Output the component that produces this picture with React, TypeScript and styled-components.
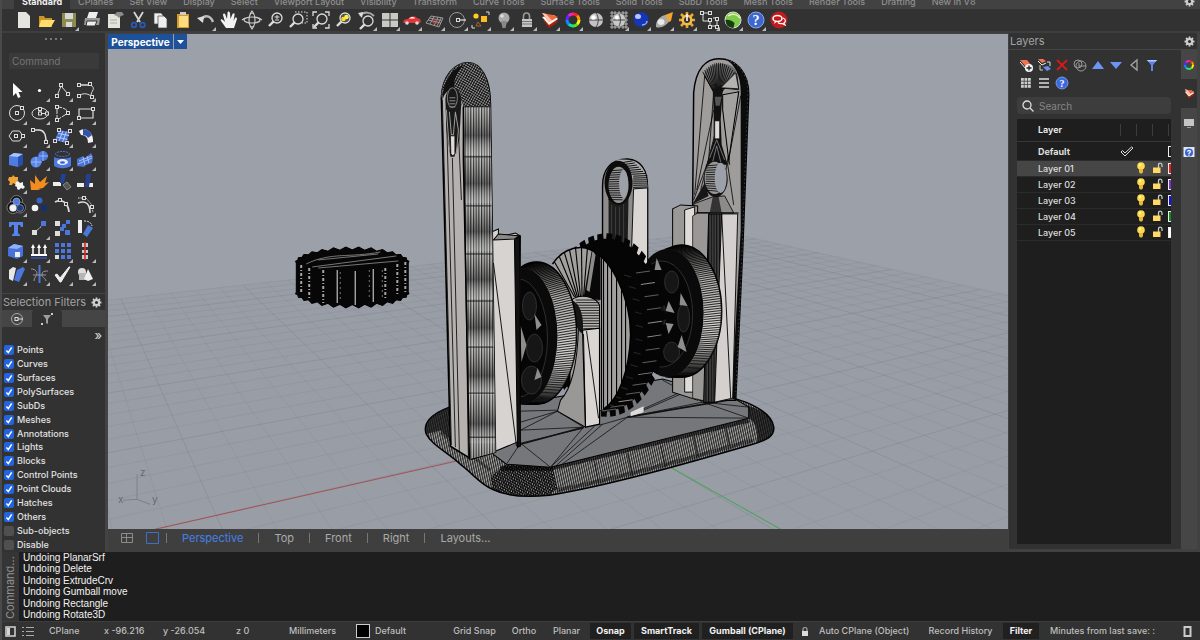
import React from "react";
import styled, { createGlobalStyle, css } from "styled-components";

const UI = `Inter, "Liberation Sans", sans-serif`;

const GlobalStyle = createGlobalStyle`
  *, *::before, *::after { box-sizing: border-box; }
  body { margin: 0; background: #323232; color: #dcdcdc; font-family: ${UI}; font-size: 10px; line-height: 14px; }
  button, input { font: inherit; color: inherit; margin: 0; }
  button { background: none; border: 0; padding: 0; cursor: pointer; }
  svg { display: block; }
`;

/* ---------- shell ---------- */
const Shell = styled.div`
  display: flex;
  flex-direction: column;
  min-height: 100vh;
  background: #414141;
  border-left: 2px solid #4a4a4a;
`;
const TabStrip = styled.nav`
  display: flex;
  align-items: flex-end;
  height: 9px;
  overflow: hidden;
  background: #424242;
  padding-left: 12px;
`;
const ToolsetTab = styled.button<{ $active?: boolean }>`
  flex: none;
  height: 14px;
  line-height: 14px;
  padding: 0 8px;
  color: ${(p) => (p.$active ? "#f0f0f0" : "#8f8f8f")};
  font-size: 9px;
  font-weight: ${(p) => (p.$active ? 700 : 500)};
  background: ${(p) => (p.$active ? "#323232" : "transparent")};
`;
const Spacer = styled.span`
  flex: 1;
`;
const GearSlot = styled.button`
  display: grid;
  place-items: center;
  width: 16px;
  height: 16px;
  margin-right: 3px;
`;
const ToolBar = styled.div`
  height: 24px;
  background: #323232;
  border-bottom: 2px solid #3e3e3e;
  padding-left: 10px;
`;
const ToolBarItems = styled.div`
  display: flex;
  justify-content: space-between;
  max-width: 778px;
`;
const IconButton = styled.button<{ $size: number }>`
  display: block;
  width: ${(p) => p.$size}px;
  height: ${(p) => p.$size}px;
`;
const Main = styled.div`
  flex: 1;
  display: grid;
  grid-template-columns: 106px minmax(0, 1fr) 192px;
`;

/* ---------- left column ---------- */
const LeftPanel = styled.aside`
  display: flex;
  flex-direction: column;
  background: #323232;
  border-right: 3px solid #434343;
`;
const Grip = styled.div`
  display: flex;
  justify-content: center;
  gap: 3px;
  padding: 5px 0 13px;
`;
const GripDot = styled.i`
  width: 2px;
  height: 2px;
  background: #777;
`;
const CommandBox = styled.input`
  width: 90px;
  height: 16px;
  margin: 0 0 10px 7px;
  padding: 0 3px;
  border: 0;
  background: #3a3a3a;
  font-size: 10px;
  &::placeholder { color: #747474; opacity: 1; }
`;
const ToolGrid = styled.div`
  display: grid;
  grid-template-columns: repeat(4, 23px);
  padding: 0 0 7px 3px;
  border-bottom: 1px solid #454545;
`;
const PanelTitle = styled.div`
  display: flex;
  align-items: center;
  justify-content: space-between;
  height: 16px;
  padding: 0 3px 0 1px;
  color: #a2a2a2;
  font-size: 11px;
  white-space: nowrap;
`;
const FilterTabs = styled.div`
  display: flex;
  height: 17px;
  background: #454545;
`;
const FilterTab = styled.button<{ $active?: boolean }>`
  display: grid;
  place-items: center;
  width: 30px;
  background: ${(p) => (p.$active ? "#323232" : "transparent")};
  border-radius: 3px 3px 0 0;
`;
const MoreButton = styled.button`
  align-self: flex-end;
  height: 16px;
  padding-right: 3px;
  color: #ddd;
  font-size: 13px;
  line-height: 11px;
`;
const FilterList = styled.div`
  flex: 1;
  display: grid;
  grid-auto-rows: 1fr;
  padding-left: 2px;
`;
const FilterRow = styled.label`
  display: flex;
  align-items: center;
  gap: 3px;
  color: #e2e2e2;
  font-size: 9px;
  font-weight: 500;
  line-height: 12px;
`;
const Check = styled.input`
  appearance: none;
  width: 10px;
  height: 10px;
  border-radius: 2px;
  background: #505050 center / 10px 10px no-repeat;
  &:checked {
    background-color: #2264e0;
    background-image: url("data:image/svg+xml,%3Csvg xmlns='http://www.w3.org/2000/svg' viewBox='0 0 10 10'%3E%3Cpath d='M2.4 5.4 4.3 7.5 7.7 2.4' fill='none' stroke='white' stroke-width='1.5'/%3E%3C/svg%3E");
  }
`;

/* ---------- viewport ---------- */
const ViewColumn = styled.main`
  display: flex;
  flex-direction: column;
  min-width: 0;
`;
const Stage = styled.section`
  position: relative;
  flex: 1;
  min-height: 300px;
  margin-top: 1px;
  background: #9ca0a8;
  overflow: hidden;
`;
const StageSvg = styled.svg`
  position: absolute;
  inset: 0;
  width: 100%;
  height: 100%;
`;
const StageLabel = styled.div`
  position: relative;
  display: flex;
  gap: 1px;
  width: max-content;
`;
const StageButton = styled.button<{ $narrow?: boolean }>`
  display: grid;
  place-items: center;
  width: ${(p) => (p.$narrow ? 13 : 65)}px;
  height: 15px;
  background: #1d529b;
  color: #fff;
  font-size: 10px;
  font-weight: 700;
`;
const ViewTabs = styled.nav`
  display: flex;
  align-items: center;
  height: 23px;
  padding: 0 0 5px 6px;
  background: #3f3f3f;
`;
const LayoutButton = styled.button`
  display: grid;
  place-items: center;
  width: 26px;
`;
const ViewTab = styled.button<{ $active?: boolean }>`
  padding: 0 15px;
  border-left: 1px solid #777;
  height: 10px;
  line-height: 10px;
  font-size: 11px;
  color: ${(p) => (p.$active ? "#4580ea" : "#aaa")};
`;

/* ---------- right column ---------- */
const RightPanel = styled.aside`
  display: grid;
  grid-template-columns: minmax(0, 1fr) 16px;
  grid-template-rows: 17px 1fr;
  margin: 0 3px 3px 1px;
  background: #323232;
`;
const LayersTitle = styled(PanelTitle)`
  grid-column: 1 / 3;
  height: 17px;
  padding: 0 2px 0 1px;
  border-bottom: 1px solid #454545;
`;
const LayersBody = styled.div`
  display: flex;
  flex-direction: column;
  padding: 6px 10px 5px 8px;
`;
const LayerTools = styled.div`
  display: grid;
  grid-template-columns: repeat(auto-fill, 18px);
  margin-bottom: 5px;
`;
const SearchBox = styled.label`
  display: flex;
  align-items: center;
  gap: 5px;
  height: 17px;
  margin-bottom: 5px;
  padding: 0 5px;
  border-radius: 4px;
  background: #3d3d3d;
  input {
    flex: 1;
    min-width: 0;
    border: 0;
    padding: 0;
    outline: 0;
    background: none;
    font-size: 10px;
  }
  input::placeholder { color: #858585; opacity: 1; }
`;
const TableWrap = styled.div`
  flex: 1;
  background: #1e1e1e;
`;
const LayerTable = styled.table`
  width: 100%;
  table-layout: fixed;
  border-collapse: collapse;
  color: #dedede;
  font-size: 9px;
  font-weight: 500;
  th, td { padding: 0; text-align: left; }
  th { height: 22px; border-bottom: 1px solid #363636; color: #f0f0f0; font-weight: 600; }
  th:first-child, td:first-child { padding-left: 21px; }
`;
const ColMark = styled.span`
  display: block;
  width: 1px;
  height: 12px;
  background: #3c3c3c;
`;
const GapRow = styled.tr`
  height: 3px;
`;
const LayerRow = styled.tr<{ $selected?: boolean; $strong?: boolean }>`
  height: 16px;
  line-height: 15px;
  background: ${(p) => (p.$selected ? "#464646" : "transparent")};
  font-weight: ${(p) => (p.$strong ? 700 : 500)};
  td { border-bottom: 1px solid #2b2b2b; }
`;
const Swatch = styled.span<{ $color: string }>`
  display: block;
  width: 3px;
  height: 11px;
  border: 1px solid #eee;
  border-right: 0;
  background: ${(p) => p.$color};
`;
const SideTabs = styled.div`
  display: flex;
  flex-direction: column;
  background: #464646;
`;
const SideTab = styled.button<{ $active?: boolean }>`
  display: grid;
  place-items: center;
  height: 29px;
  background: ${(p) => (p.$active ? "#323232" : "transparent")};
`;

/* ---------- history and status ---------- */
const History = styled.section`
  display: grid;
  grid-template-columns: 17px 1fr;
  height: 69px;
  background: #1e1e1e;
  color: #f2f2f2;
`;
const HistoryLabel = styled.div`
  writing-mode: vertical-rl;
  transform: rotate(180deg);
  padding-top: 2px;
  background: #353535;
  color: #929292;
  font-size: 11px;
  line-height: 17px;
`;
const HistoryList = styled.ol`
  display: flex;
  flex-direction: column;
  justify-content: space-between;
  margin: 0;
  padding: 0 0 1px 4px;
  list-style: none;
  font: 500 10px/11px "Liberation Sans", Arial, sans-serif;
`;
const StatusBar = styled.footer`
  display: flex;
  align-items: center;
  height: 19px;
  padding-left: 3px;
  background: #323232;
  border-top: 1px solid #3d3d3d;
  color: #bebebe;
  font-size: 9px;
  font-weight: 500;
  white-space: nowrap;
`;
const StatusSlot = styled.button<{ $w: number; $lead?: number }>`
  flex: none;
  width: ${(p) => p.$w}px;
  margin-left: ${(p) => p.$lead ?? 0}px;
  display: flex;
  align-items: center;
  gap: 5px;
`;
const Toggle = styled.button<{ $on?: boolean; $w: number }>`
  flex: none;
  width: ${(p) => p.$w}px;
  height: 16px;
  margin-right: 3px;
  text-align: center;
  ${(p) => p.$on && css`
    background: #202020;
    color: #f2f2f2;
    font-weight: 700;
  `}
`;
const MaterialSwatch = styled.span`
  width: 14px;
  height: 14px;
  border: 1px solid #ccc;
  background: #000;
`;

/* ---------- icon helpers ---------- */
const W = "#dcdcdc";
const Fly = ({ s }: { s: number }) => <path d={`M${s - 1} ${s - 4}v4h-4z`} fill="#b9b9b9" />;
const Node = ({ x, y }: { x: number; y: number }) => (
  <rect x={x - 1.5} y={y - 1.5} width="3" height="3" fill="#323232" stroke={W} strokeWidth="1" />
);
const Cog = ({ size = 11 }: { size?: number }) => (
  <svg width={size} height={size} viewBox="0 0 12 12">
    <g stroke="#cfcfcf" strokeWidth="2">
      <path d="M6 .6v10.8M.6 6h10.8M2.2 2.2l7.6 7.6M9.800 2.2 2.200 9.800" />
    </g>
    <circle cx="6" cy="6" r="3.900" fill="#cfcfcf" />
    <circle cx="6" cy="6" r="1.700" fill="#323232" />
  </svg>
);
const wheelColors = ["#f22", "#f90", "#fe1", "#4e2", "#1db", "#18f", "#62f", "#e2c"];
const ColorWheel = ({ cx, cy, r, w }: { cx: number; cy: number; r: number; w: number }) => (
  <g fill="none" strokeWidth={w}>
    {wheelColors.map((c, i) => {
      const a = (i * Math.PI) / 4 - Math.PI / 2;
      const b = a + Math.PI / 4 + 0.05;
      return (
        <path key={c} stroke={c}
          d={`M${cx + r * Math.cos(a)} ${cy + r * Math.sin(a)}A${r} ${r} 0 0 1 ${cx + r * Math.cos(b)} ${cy + r * Math.sin(b)}`} />
      );
    })}
  </g>
);
const Lens = ({ x = 13, y = 9 }: { x?: number; y?: number }) => (
  <g fill="none" stroke={W}>
    <circle cx={x} cy={y} r="5" strokeWidth="1.300" />
    <path d={`M${x - 3.600} ${y + 3.600}L${x - 8} ${y + 8}`} strokeWidth="2.400" />
  </g>
);
const Layers = () => (
  <g>
    <path d="M4 11l6 8 9-6-4-4z" fill="#a81f0c" />
    <path d="M3 8l7 8 9-6-4-4z" fill="#f1f1f1" />
    <path d="M3 4l7 9 9-5-5-2z" fill="#f0653a" />
    <path d="M3 4l7 9 3-1.500L7 5z" fill="#ffc9b0" />
  </g>
);
const Cursor = <path d="M8 4v13l3-3 2 5 2.500-1-2-5h4z" fill="#fff" />;

const topIcons: [string, React.ReactNode, boolean?][] = [
  ["New", <path key="a" d="M6 3h8l4 4v12H6z" fill="#e4e4e0" />],
  ["Open", <g key="a"><path d="M4 7h5l1 2h7v9H4z" fill="#c99524" /><path d="M6 11h14l-4 7H4z" fill="#ffdc6b" /></g>],
  ["Save", <g key="a"><path d="M4 4h14v14H4z" fill="#8d8a52" /><path d="M7 4h8v6H7zM8 13h6v5H8z" fill="#d8d8d8" /></g>, true],
  ["Print", <g key="a"><path d="M8 3h9l-2 6H6z" fill="#eee" /><path d="M4 9h15l-1 7H3z" fill="#9a9a9a" /><path d="M6 12h10l-2 5H5z" fill="#ededed" stroke="#333" /></g>],
  ["Properties", <g key="a"><path d="M4 5h12v14H4z" fill="#e3e3dc" /><path d="M10 6l3-3h5l2 3-3 1-2 2-2-2z" fill="#8c8c8c" /><path d="M6 11h7M6 14h7" stroke="#aaa" /></g>],
  ["Cut", <g key="a" fill="none" strokeWidth="1.800"><path d="M7 3l6 10M16 3l-6 10" stroke="#d5d5d5" /><circle cx="7" cy="16" r="2.300" stroke="#2859b9" /><circle cx="15.500" cy="16" r="2.300" stroke="#2859b9" /></g>],
  ["Copy", <g key="a" fill="#eee" stroke="#444" strokeWidth=".700"><path d="M5 4h7l2 2v9H5z" /><path d="M9 7h6l3 3v9H9z" /></g>],
  ["Paste", <g key="a"><path d="M5 5h12v14H5z" fill="#d49a2a" /><path d="M7 7h9v11H7z" fill="#ffdb80" /><path d="M8 3h6v3H8z" fill="#ccc" /></g>],
  ["Undo", <g key="a"><path d="M6 12c2-6 9-7 12 1" fill="none" stroke="#bcbcbc" strokeWidth="2.400" /><path d="M2 9l7-2-1 7z" fill="#ddd" /></g>, true],
  ["Pan", <path key="a" d="M8 19l-5-7c-1-2 1-2 2-1l2 2-2-7c0-2 2-2 2.500 0L9 10 9.500 4c0-2 2-2 2.500 0l.5 6L14.500 5c1-1 2.500-1 2 1l-1 6 1.500-3c1-1 2 0 2 1l-3 9z" fill="#f2f2f2" />],
  ["Rotate View", <g key="a" fill="none" stroke="#ccc" strokeWidth="1.200"><ellipse cx="11" cy="11" rx="8" ry="3" /><ellipse cx="11" cy="11" rx="3" ry="7" /><path d="M1 11l3-2M21 11l-3-2M9 5l2-3 2 3M9 17l2 3 2-3" /></g>],
  ["Zoom Dynamic", <g key="a"><Lens /><path d="M10.500 8h5M13 6v4M11 11h4" stroke={W} /></g>],
  ["Zoom Window", <g key="a"><Lens x={11} y={10} /><path d="M8 3h12v11h-5" fill="none" stroke={W} strokeDasharray="1.500 1.500" /></g>],
  ["Zoom Extents", <g key="a"><Lens x={12} y={10} /><path d="M3 7V3h4M15 3h4v4M3 15v4h4M19 15v4h-4" fill="none" stroke={W} strokeWidth="1.300" /></g>],
  ["Zoom Selected", <g key="a"><Lens x={12} /><circle cx="12" cy="9" r="4" fill="#555" /><circle cx="10.500" cy="10" r="2.300" fill="#fd2" /><circle cx="13.500" cy="8" r="2.300" fill="#fe4" /></g>],
  ["Undo View", <g key="a"><Lens x={12} y={12} /><path d="M4 7c4-5 10-4 14 0" fill="none" stroke="#aaa" strokeWidth="2" /><path d="M2 4l5-1-1 6z" fill="#ddd" /></g>, true],
  ["Four View", <g key="a" fill="#c9c9c4"><path d="M3 4h7.500v6.500H3zM11.500 4H19v6.500h-7.500zM3 11.500h7.500V18H3zM11.500 11.500H19V18h-7.500z" /></g>, true],
  ["Set View", <g key="a"><path d="M2 13c1-3 3-3 5-3 2-3 7-4 9-1l3 1c1 1 1 3 0 4H3z" fill="#e23535" /><path d="M8 9.500c2-2 5-2 6 0z" fill="#fff" /><circle cx="6" cy="14" r="1.800" fill="#ddd" /><circle cx="16" cy="14" r="1.800" fill="#ddd" /></g>, true],
  ["CPlane", <g key="a" fill="none" stroke="#a5a5a5" strokeWidth=".900"><path d="M7 7l12 2-4 9-13-4zM4 11l13 3M5.500 9l12 2.500M10 7.500L6 15M14 8l-4 9M17 9l-4 8" /><path d="M9 11h4v3H9z" stroke="#c44" /></g>, true],
  ["Object Snap", <g key="a" fill="none" stroke={W}><circle cx="10" cy="11" r="7.500" stroke="#999" /><path d="M13 11h6" strokeWidth="1.300" /><Node x={11} y={11} /></g>, true],
  ["Select", <g key="a"><circle cx="6" cy="7" r="2.600" fill="#fc2" /><path d="M11 7h6v6h-6z" fill="#fb2" /><path d="M6 17l2-4 3 4z" fill="none" stroke="#a62" /><path d="M16 3h3v3M2 16v3h3" fill="none" stroke={W} /></g>, true],
  ["Visibility", <g key="a"><circle cx="11" cy="9" r="5.500" fill="#a9a9a9" /><path d="M8 12h6l-1.500 7h-3z" fill="#888" /><circle cx="9" cy="7" r="1.800" fill="#ddd" /></g>, true],
  ["Lock", <g key="a"><path d="M7.500 11V7c0-4 6-4 6 0v4" fill="none" stroke="#999" strokeWidth="1.600" /><path d="M6 10h10v8H6z" fill="#c5c5c5" /><path d="M6 12.500h10M6 15h10" stroke="#777" /></g>, true],
  ["Layers", <Layers key="a" />, true],
  ["Object Color", <ColorWheel key="a" cx={11} cy={11} r={6} w={3} />, true],
  ["Shade", <g key="a"><circle cx="11" cy="11" r="7" fill="#c4c4c4" /><path d="M4 11h14M11 4c3 4 3 10 0 14" stroke="#444" fill="none" /><circle cx="8.500" cy="8.500" r="2.300" fill="#fff" /></g>],
  ["Wireframe", <g key="a"><path d="M2 4h18M2 7h18M2 15h18M2 18h18M4 2v18M7 2v18M15 2v18M18 2v18M11 2v18M2 11h18" stroke="#ccc" strokeWidth=".800" /><circle cx="11" cy="11" r="6.500" fill="#c9c9c9" /><path d="M11 5c2 4 2 8 0 12M5 11h12" stroke="#444" fill="none" /><circle cx="9" cy="8.500" r="2" fill="#fff" /></g>, true],
  ["Render", <g key="a"><circle cx="11" cy="10.500" r="7.500" fill="#1736b5" /><ellipse cx="8" cy="7.500" rx="3" ry="2.500" fill="#b8c8ff" /><path d="M12 16c3 0 5-2 5-4" stroke="#8ab0ff" strokeWidth="1.500" fill="none" /></g>, true],
  ["Spotlight", <g key="a"><path d="M3 18c-1-6 5-12 10-12l4 5c-3 5-9 9-14 7z" fill="#a9a9a9" /><ellipse cx="8" cy="13" rx="3.500" ry="3" fill="#e9e9e9" /><path d="M12 6l8-3-2 9-2 1z" fill="#f3a533" /></g>, true],
  ["Options", <g key="a"><path d="M11 3v16M3 11h16M5 5l12 12M17 5L5 17" stroke="#e8a82c" strokeWidth="2.600" /><circle cx="11" cy="11" r="5.500" fill="#f1bd4b" /><circle cx="11" cy="11" r="3" fill="#333" /><path d="M11 5v7" stroke="#fff" strokeWidth="1.600" /></g>, true],
  ["History", <g key="a" fill="none" stroke={W}><path d="M3 4h8M4 4v8h6M11 9v8h7M14 9h4v8" /><Node x={3} y={4} /><Node x={11} y={4} /><Node x={11} y={11} /><Node x={18} y={10} /><Node x={11} y={18} /><Node x={18} y={18} /></g>, true],
  ["Grasshopper", <g key="a"><circle cx="11" cy="11" r="8" fill="#7fc94b" stroke="#ddd" /><path d="M3.500 11c3-1 7 1 9 3l-1 5c-5 0-8-3-8-8z" fill="#173b12" /><path d="M6 7c4-3 9-2 12 2" stroke="#dcf5b2" strokeWidth="1.500" fill="none" /></g>, true],
  ["Help", <g key="a"><circle cx="11" cy="11" r="8" fill="#3d66cf" stroke="#8aa8ea" /><text x="11" y="16" textAnchor="middle" fontSize="14" fontWeight="700" fill="#fff" fontFamily="Liberation Serif">?</text></g>, true],
  ["Forum", <g key="a"><circle cx="11" cy="11" r="8.500" fill="#c2191c" /><ellipse cx="9.500" cy="9.500" rx="4.500" ry="3" fill="none" stroke="#fff" strokeWidth="1.500" /><path d="M7 12l-1 3 3-2.500" fill="#fff" /><path d="M15 9c3 1 3 4 1 5l1 2-3-1.500c-2 .5-3 0-4-1" fill="none" stroke="#fff" strokeWidth="1.200" /></g>],
];

const Mesh = ({ dy = 0 }: { dy?: number }) => (
  <g>
    <path d={`M8 ${5 + dy}l11 2-4 11-11-3z`} fill="#4d74d4" />
    <path d={`M12 ${6 + dy}l-4 10M15.500 ${6.500 + dy}l-4 10.500M7 ${8.500 + dy}l11 2M5.500 ${12 + dy}l11 2.500`} stroke="#b7cbff" fill="none" />
  </g>
);
const paletteIcons: [string, React.ReactNode, boolean?][] = [
  ["Select", Cursor],
  ["Point", <g key="a"><circle cx="11.500" cy="11.500" r="1.600" fill="#fff" /></g>, true],
  ["Polyline", <g key="a" stroke={W} fill="none"><path d="M6 17L10 7l7 8" /><Node x={6} y={17} /><Node x={10} y={6} /><Node x={17} y={15} /></g>, true],
  ["Curve", <g key="a" stroke={W} fill="none"><path d="M5 6h9c5 0 6 3 5 5s-2 3-2 6M5 6h11" /><path d="M5 17c3-3 8-3 12 0" /><Node x={5} y={6} /><Node x={16} y={5} /><Node x={5} y={17} /><Node x={18} y={18} /></g>, true],
  ["Circle", <g key="a" stroke={W} fill="none"><circle cx="12" cy="11" r="7.500" /><Node x={12} y={11} /><Node x={17} y={6} /></g>, true],
  ["Ellipse", <g key="a" stroke={W} fill="none"><ellipse cx="12" cy="11.500" rx="8" ry="5.500" /><path d="M12 11.500h8M12 6v5" /><Node x={12} y={11.500} /><Node x={12} y={7} /><Node x={19} y={11.500} /></g>, true],
  ["Arc", <g key="a" stroke={W} fill="none"><path d="M6 5c6 0 11 3 11 6M6 18L17 11M6 18V5" strokeDasharray="5 1" /><Node x={6} y={5} /><Node x={6} y={18} /><Node x={17} y={11} /></g>, true],
  ["Rectangle", <g key="a" stroke={W} fill="none" strokeWidth="1.200"><path d="M5 7h14v9H5z" /><Node x={5} y={16} /><Node x={19} y={7} /></g>, true],
  ["Polygon", <g key="a" stroke={W} fill="none"><path d="M4 11l3.500-5h7L18 11l-3.500 5h-7z" /><Node x={11} y={11} /><Node x={18} y={11} /></g>, true],
  ["Fillet", <g key="a" stroke={W} fill="none" strokeWidth="1.500"><path d="M5 5h6c5 0 7 5 7 12" /><Node x={5} y={5} /><Node x={18} y={17} /></g>, true],
  ["Surface", <g key="a"><Mesh /><Node x={8} y={5} /><Node x={19} y={6} /><Node x={4} y={16} /><Node x={16} y={18} /></g>, true],
  ["Bend", <g key="a"><path d="M5 6c7-5 15 2 14 11l-5 1c0-5-2-8-7-8z" fill="#f1f1f1" /><path d="M9 4c4 0 7 2 9 6l-4 3c-1-2-3-3-5-3z" fill="#3155ae" /></g>, true],
  ["Box", <g key="a"><path d="M4 8l5-3 9 1v10l-5 3-9-2z" fill="#4e7ce2" /><path d="M4 8l5-3 9 1-5 3z" fill="#a8c4ff" /><path d="M13 9l5-3v10l-5 3z" fill="#274eaa" /></g>, true],
  ["Sphere", <g key="a"><circle cx="15" cy="8" r="5" fill="#4b77dc" /><circle cx="8" cy="14" r="5.500" fill="#5a86ea" /><path d="M3 14h11M8 9v10M15 3v10M11 8h9" stroke="#a9c3ff" strokeWidth=".800" /></g>, true],
  ["Boolean", <g key="a"><ellipse cx="11.500" cy="6" rx="7" ry="2.500" fill="none" stroke="#4d78dc" strokeDasharray="2 1" /><path d="M3 9v9c5 3 12 3 17 0V9c-5 2-12 2-17 0z" fill="#4d78dc" /><ellipse cx="11.500" cy="14" rx="5.500" ry="3" fill="#e6edff" /><ellipse cx="11.500" cy="14.500" rx="2.500" ry="1.300" fill="#3c63c4" /></g>, true],
  ["Extrude", <g key="a"><path d="M3 11l6-3 2 2 6-5 2 4-1 6-6 2-2 2-7-1z" fill="#4b72cf" /><path d="M5 13l13-5M4 16l14-6M9 9l2 8M13 8l2 7" stroke="#a5bfff" /></g>, true],
  ["Join", <g key="a"><path d="M4 6h3l1-2 2 2h3v3l-1 2 1 2h-3l-2-1-1 2H4l1-3-2-2z" fill="#f4a436" /><path d="M11 11l2-1 2 2 3-1v3l2 2-2 2-2-1-2 2-2-1 0-2-2-1z" fill="#f4f4f4" /></g>, true],
  ["Explode", <path key="a" d="M3 19L2 9l5 4 0-9 5 7 7-6-2 7 4-1-6 6-5 1 3 1z" fill="#f28c1e" />],
  ["Trim", <g key="a"><path d="M2 11h8v4H2z" fill="#eee" /><path d="M10 3h5l-2 9h-4z" fill="#253f92" /><path d="M12 14l4-3 4 5-4 3z" fill="#555" stroke="#888" /></g>],
  ["Split", <g key="a"><path d="M3 12h7v4H3zM13 12h6v4h-6z" fill="#eee" /><path d="M12 3h5l-2 13h-4z" fill="#253f92" /></g>],
  ["Group", <g key="a" stroke="#ccc" strokeWidth=".500"><circle cx="11.500" cy="7.500" r="6" fill="#111" /><circle cx="8" cy="13.500" r="6" fill="#111" /><circle cx="15" cy="13.500" r="5.500" fill="#111" /><circle cx="11.500" cy="7.500" r="3.500" fill="#4d7ae0" /><circle cx="8" cy="14" r="3.500" fill="#f4f4f4" /><circle cx="15" cy="14" r="3.500" fill="#1d3a80" /></g>, true],
  ["Ungroup", <g key="a"><circle cx="11.500" cy="6.500" r="3" fill="#3764c8" /><circle cx="7" cy="14" r="3.300" fill="#f4f4f4" /><circle cx="16" cy="14" r="3.300" fill="#16306d" /></g>],
  ["Edit Points", <g key="a" stroke={W} fill="none"><path d="M4 8c7-4 13 1 14 10" strokeWidth="1.800" /><Node x={9} y={6} /><Node x={15} y={10} /></g>],
  ["Control Points", <g key="a" stroke={W} fill="none"><path d="M4 9c8-3 12 1 12 10" strokeWidth="1.600" /><path d="M4 4h8l6 7 1 8" strokeDasharray="1.500 1" /><Node x={10} y={4} /><Node x={18} y={13} /></g>, true],
  ["Text", <path key="a" d="M4 5h14v5h-2l-1-2h-2v8l2 2v1H7v-1l2-2V8H7l-1 2H4z" fill="#5583ea" />],
  ["Move", <g key="a"><path d="M7 15L15 8" stroke="#ddd" strokeDasharray="2 1" /><path d="M4 13h5v5H4z" fill="#ddd" /><path d="M13 4h5v5h-5z" fill="#4b77dc" /></g>, true],
  ["Copy Objects", <g key="a"><path d="M4 4h5v5H4zM4 14h5v5H4z" fill="#ddd" /><path d="M11 7h4v4h-4zM15 3h4v4h-4zM9 10h4v4H9zM14 13h5v5h-5z" fill="#4b77dc" /></g>],
  ["Align", <g key="a"><path d="M4 3h4v13H4z" fill="#eee" /><path d="M14 8l5 3-6 9-4-3z" fill="#4b77dc" /><path d="M10 4c4 0 7 1 8 5" stroke={W} fill="none" strokeDasharray="2 1" /></g>],
  ["Solid Tools", <g key="a"><path d="M3 8l6-4 9 2v10l-6 3-9-3z" fill="#4573d8" /><path d="M3 8l6-4 9 2-6 3z" fill="#8fb1ff" /><path d="M10 12h5v5h-5z" fill="#eee" /></g>, true],
  ["Extrude Curve", <g key="a"><path d="M5 15V6M11 15V6M17 15V6" stroke="#fff" strokeWidth="1.500" /><path d="M3 8l2-4 2 4zM9 8l2-4 2 4zM15 8l2-4 2 4zM3 14h16v2H3z" fill="#fff" /><path d="M3 17h16v2H3z" fill="#2e4d96" /></g>, true],
  ["Array", <g key="a">{[0, 1, 2].map((r) => [0, 1, 2].map((c) => <rect key={`${r}${c}`} x={4 + c * 6} y={3 + r * 6} width="4" height="4" fill={r === 2 && c === 0 ? "#ddd" : "#4b77dc"} />))}</g>, true],
  ["Mirror", <g key="a"><path d="M8 3h6v4H8zM8 10h6v3H8zM8 15h6v4H8z" fill="#ccc" /><path d="M11 2v18" stroke="#d22" strokeWidth="1.600" /></g>, true],
  ["Offset", <g key="a"><path d="M4 7l4-3 3 1-3 13-4-2z" fill="#e8e8e8" /><path d="M12 7l6-3 2 2-6 13-5-2z" fill="#4b77dc" /></g>, true],
  ["Flow", <g key="a" fill="none" stroke="#999"><path d="M11.500 2v18" stroke="#4b77dc" strokeWidth="2" /><path d="M3 6c5 0 6 3 6 5s-3 3-3 7M20 8c-5 0-6 1-6 4s3 2 4 6M5 12h13" /></g>, true],
  ["Check", <path key="a" d="M4 12l2-1 3 4L18 4l1 0-9 15H9z" fill="#eee" stroke="#eee" />, true],
  ["Primitives", <g key="a"><circle cx="8" cy="9" r="4" fill="#ddd" /><path d="M5 10h7v7H5z" fill="#b5b5b5" /><path d="M14 6l5 10-5 2-4-2z" fill="#eee" /></g>, true],
];

/* ---------- scene ---------- */
type P = [number, number];
const pts = (a: P[]) => a.map((p) => `${p[0].toFixed(1)},${p[1].toFixed(1)}`).join(" ");
const meet = (a: P, b: P, c: P, d: P): P => {
  const den = (a[0] - b[0]) * (c[1] - d[1]) - (a[1] - b[1]) * (c[0] - d[0]);
  const m = a[0] * b[1] - a[1] * b[0];
  const n = c[0] * d[1] - c[1] * d[0];
  return [(m * (c[0] - d[0]) - (a[0] - b[0]) * n) / den, (m * (c[1] - d[1]) - (a[1] - b[1]) * n) / den];
};
const vpA: P = [2131, 74];
const vpB: P = [22, 73];
const footA = (k: number): P => [155 + 91 * k, 529];
const footB = (k: number): P => [772 + 55 * k, 529];

const GroundGrid = () => {
  const edgeA = footA(-23);
  const edgeB = footB(23);
  const corner = meet(edgeA, vpA, edgeB, vpB);
  const a: React.ReactNode[] = [];
  for (let k = -23; k <= 16; k++) {
    const f = footA(k);
    const far = meet(f, vpA, edgeB, vpB);
    const t = 108 < f[0] ? f : meet(f, vpA, [108, 0], [108, 1]);
    a.push(<path key={`a${k}`} d={`M${t[0]} ${t[1]}L${far[0]} ${far[1]}`} opacity={k % 5 === 0 ? 0.4 : 0.22} />);
  }
  for (let k = -13; k <= 23; k++) {
    const f = footB(k);
    const far = meet(f, vpB, edgeA, vpA);
    a.push(<path key={`b${k}`} d={`M${f[0]} ${f[1]}L${far[0]} ${far[1]}`} opacity={k % 5 === 0 ? 0.4 : 0.22} />);
  }
  return (
    <g>
      <path d={`M108 300L${corner[0]} ${corner[1]}L1007 294V529H108z`} fill="#969ba3" opacity=".45" />
      <g stroke="#747a84" strokeWidth=".800">{a}</g>
      <path d="M155 529L460 460" stroke="#a8474d" strokeWidth=".900" />
      <path d="M668 466L780 529" stroke="#4da35c" strokeWidth="1" />
    </g>
  );
};

type Ell = { cx: number; cy: number; rx: number; ry: number };
const at = (e: Ell, deg: number, k = 1): P => {
  const a = (deg * Math.PI) / 180;
  return [e.cx + e.rx * k * Math.cos(a), e.cy + e.ry * k * Math.sin(a)];
};
const Rim = ({ front, back, from, to, step }: { front: Ell; back: Ell; from: number; to: number; step: number }) => {
  const lines: React.ReactNode[] = [];
  for (let d = from; d <= to; d += step) {
    const p = at(front, d);
    const q = at(back, d);
    lines.push(<path key={d} d={`M${p[0]} ${p[1]}L${q[0]} ${q[1]}`} />);
  }
  return <g stroke="#000" strokeWidth=".800">{lines}</g>;
};
const Shards = ({ list }: { list: string[] }) => (
  <g fill="#8f8e8d">{list.map((d) => <polygon key={d} points={d} />)}</g>
);
const Wheel = ({ front, back, inner, shards, holes }: { front: Ell; back: Ell; inner: Ell; shards: string[]; holes: Ell[] }) => (
  <g>
    <ellipse {...back} fill="#c9c7c5" stroke="#000" strokeWidth="1.500" />
    <ellipse {...back} fill="url(#wheelShade)" />
    <Rim front={front} back={back} from={-95} to={95} step={2.1} />
    <ellipse {...front} fill="#0a0a0a" />
    <ellipse {...inner} fill="#060606" stroke="#484848" strokeWidth=".600" />
    {holes.map((h, i) => (
      <ellipse key={i} {...h} fill="#161616" stroke="#3c3c3c" strokeWidth=".700" />
    ))}
    <Shards list={shards} />
  </g>
);

const outerGear: Ell = { cx: 606, cy: 325, rx: 58, ry: 89 };
const BigGear = () => {
  const ring: P[] = [];
  const marks: React.ReactNode[] = [];
  const teeth = 40;
  const pitch = 360 / teeth;
  for (let i = 0; i < teeth; i++) {
    const d = i * pitch;
    const right = d < 80 || d > 290;
    const root = right ? 0.96 : 0.97;
    ring.push(at(outerGear, d, 1.03), at(outerGear, d + pitch * 0.6, 1.03), at(outerGear, d + pitch * 0.65, root), at(outerGear, d + pitch * 0.95, root));
    if (d < 75 || d > 310) {
      const q = at(outerGear, d + pitch * 0.8, 0.97);
      marks.push(<path key={i} d={`M${q[0] - 15} ${q[1] + 1}L${q[0] - 1} ${q[1] - 1}`} opacity={i % 3 ? 0.65 : 1} />);
      marks.push(<path key={`${i}r`} d={`M${q[0] - 27} ${q[1] + 3}l7 2`} opacity=".25" />);
    }
  }
  const fans: P[] = [[554, 262], [559, 257], [564, 253], [569, 250], [575, 248], [581, 247], [587, 247], [593, 249]];
  return (
    <g>
      <polygon points={pts(ring)} fill="#050505" />
      <g stroke="#8e8e8e" strokeWidth="1">{marks}</g>
      <clipPath id="gearFace"><path d="M552 264C560 252 572 246 585 248C612 255 630 300 630 335C629 370 618 400 603 409L592 412L570 400V300z" /></clipPath>
      <g clipPath="url(#gearFace)">
        <rect x="540" y="240" width="95" height="180" fill="#a2a09f" />
        <g stroke="#000" strokeWidth="1.100">
          {fans.map((f, i) => <path key={i} d={`M${f[0]} ${f[1]}L${574 + i * 1.500} 297`} />)}
          {[601, 603, 607, 611, 616, 621, 625].map((x) => <path key={x} d={`M${x} 245V420`} />)}
        </g>
        <path d="M583 298L592 246L600 250V300z" fill="#080808" />
        <path d="M586 290L592 250 595 255 589 292z" fill="#8d8b8a" />
      </g>
      <path d="M552 264C560 252 572 246 585 248C612 255 630 300 630 335C629 370 618 400 603 409" fill="none" stroke="#000" strokeWidth="1.500" />
    </g>
  );
};

const SmallGear = () => {
  const top: P[] = [];
  const n = 28;
  for (let i = 0; i <= n; i++) {
    const a = Math.PI + (i * Math.PI) / n;
    const k = i % 2 ? 1 : 0.82;
    top.push([352 + 57 * Math.cos(a) * (i % 2 ? 1 : 0.98), 263 + 16 * k * Math.sin(a)]);
  }
  const bottom: P[] = [];
  for (let i = 0; i <= n; i++) {
    const a = (i * Math.PI) / n;
    const k = i % 2 ? 1 : 0.78;
    bottom.push([352 + 57 * Math.cos(a) * (i % 2 ? 1 : 0.98), 292 + 16 * k * Math.sin(a)]);
  }
  return (
    <g>
      <polygon points={pts([...top, ...bottom])} fill="#070707" stroke="#000" />
      <g stroke="#a5a5a5" fill="none">
        <path d="M306 264C330 252 350 258 380 252M312 267L396 256M318 260l60-6M318 268l80-7" strokeWidth=".700" />
        <g strokeWidth="2" strokeDasharray="3 2 1 2">
          <path d="M301 265v28M309 268v32M323 270v33M385 268v32M397 264v32M405 262v30" />
        </g>
        <path d="M337 270v33M355 271v34M373 269v33" strokeWidth="1.400" />
        <path d="M340 272v28M369 270v30M382 270v28" strokeWidth=".700" strokeDasharray="2 3" />
      </g>
    </g>
  );
};

const BEVEL = "M449 407C430 414 422 424 426 434C432 446 448 452 461 465C474 475 480 484 492 489C508 497 530 497 549 495C610 485 690 462 752 444C766 440 774 436 773 427C772 418 762 409 745 402L733 398H520z";
const Base = () => (
  <g>
    <path d={BEVEL} fill="#aaa9a8" />
    <path d={BEVEL} fill="url(#bevelLines)" stroke="#000" strokeWidth="1.500" />
    <path d="M492 489C508 497 530 497 549 495L557 488L552 467L506 464L490 476z" fill="url(#mesh)" />
    <path d="M426 434C424 420 432 412 449 407V438L440 430z" fill="#111" opacity=".75" />
    <path d="M745 405C762 409 772 418 773 427C773 436 768 438 756 443C758 430 755 422 748 418z" fill="#0b0b0b" opacity=".72" />
    <path d="M500 468L550 468L748 420" fill="none" stroke="#000" strokeWidth="5" opacity=".6" />
    <path d="M556 490C615 479 690 458 752 440" fill="none" stroke="#000" strokeWidth="4" opacity=".4" />
    <path d="M490 452L506 464L550 467L748 418V407L733 398L662 379L520 403z" fill="#76777a" stroke="#000" />
    <path d="M440 432C455 445 475 458 490 470" stroke="#000" strokeWidth="3" opacity=".35" fill="none" />
    <g stroke="#111" fill="none" strokeWidth=".800">
      <path d="M520 443L550 467M520 443L506 464M550 467L583 427M550 467L594 426M556 465L602 424M560 465L627 417M520 443L583 428M520 430L583 427L557 411L520 422M520 430L557 411M599 425L627 417L748 418M627 417L702 402L748 418M662 380L702 402M640 410L680 392M627 417L680 394M702 402L748 407M520 411L557 410" />
      <path d="M520 444L583 427M627 417L733 399" strokeWidth="1.600" />
      <path d="M594 461l4 22M627 453l5 23M660 445l5 22M693 436l4 20M725 428l4 18" />
    </g>
  </g>
);

const RightTower = () => (
  <g>
    <path d="M693 93C695 68 706 59 718 59C735 59 748 72 748 95L742 250L735 400H700L692 205z" fill="#9f9d9c" stroke="#000" strokeWidth="1.500" />
    <path d="M724 59C740 62 748 76 748 95L742 250L735 400L731 398L740 230V92C740 76 734 64 724 59z" fill="#0b0b0b" />
    <path d="M726 60C743 66 748 80 747 97L741 260L735 395" fill="none" stroke="#555" strokeWidth="1" strokeDasharray="1 3" />
    <path d="M703 75C708 62 730 60 736 72L719 94L712 92z" fill="#6a6a6a" />
    <g stroke="#000" strokeWidth=".800" fill="none">
      {Array.from({ length: 17 }, (_, i) => <path key={i} d={`M${702 + i * 2} ${72 - 9 * Math.sin((i * Math.PI) / 16)}L${714 + i * 0.400} 94`} />)}
      <path d="M704 76L713 92L708 160L693 200M704 76L694 195M713 110L696 190M714 135L700 190M738 92L722 190M740 96L727 165L733 205M720 90L729 165M736 74L738 90L720 88zM738 92L722 98" />
    </g>
    <path d="M720 88L735 73L738 89z" fill="#b5b3b1" stroke="#000" strokeWidth=".800" />
    <path d="M722 95L738 92L728 160L722 110z" fill="#a4a2a0" stroke="#000" />
    <path d="M712 90L722 90L720 120L721 145L727 165H706L713 140L713 112z" fill="#111" />
    <path d="M714 97L721 97L719 106H715z" fill="#555" />
    <path d="M714 121h5v18h-5z" fill="#dedbd8" stroke="#000" strokeWidth=".700" />
    <path d="M709 158L716 140L724 160M712 162L716 146L720 162" fill="none" stroke="#888" strokeWidth=".800" />
    <ellipse cx="715" cy="179" rx="12" ry="18" fill="#141414" />
    <ellipse cx="714" cy="178" rx="10" ry="16" fill="#999" />
    <g stroke="#000" strokeWidth=".800">{Array.from({ length: 12 }, (_, i) => <path key={i} d={`M705 ${166 + i * 2.200}L718 ${165 + i * 2.400}`} />)}</g>
    <ellipse cx="720" cy="178" rx="6" ry="15" fill="#9ca0a8" />
    <path d="M693 204L712 197L724 196L733 213L697 213z" fill="#8d8b8a" stroke="#000" strokeWidth=".800" />
    <path d="M712 197h6l3 16h-12z" fill="#333" />
    <path d="M692 204L704 183L708 196z" fill="#171717" />
    <path d="M672 209L680 205L697 206V400L672 392z" fill="#9b9997" stroke="#000" />
    <path d="M684 210L694 207V392H684z" fill="#dedbd8" stroke="#000" strokeWidth=".900" />
    <path d="M692 216L697 213H709V402L692 398z" fill="#9a9896" stroke="#000" strokeWidth=".700" />
    <path d="M708 214H722L716 402H703z" fill="#444" />
    <path d="M708 214H722L716 402H703z" fill="url(#vLines)" stroke="#000" />
    <path d="M721 214H737L732 398L714 402z" fill="#d3d0cd" stroke="#000" strokeWidth=".900" />
    <path d="M721 214L730 398M695 213H738" stroke="#000" strokeWidth=".900" />
  </g>
);

const CenterArm = () => (
  <g>
    <path d="M602 250V186C602 170 610 159 627 159C641 160 647 170 647 188V275H602z" fill="#8f8d8c" stroke="#000" strokeWidth="1.400" />
    <path d="M614 160C640 157 647 170 647 189L633 190C632 172 626 163 614 160z" fill="#aaa" />
    <g stroke="#000" strokeWidth=".900">{Array.from({ length: 14 }, (_, i) => <path key={i} d={`M${620 + Math.min(i, 7) * 1.800} ${163 + i * 1.900}L${632 + Math.min(i, 7) * 2.100} ${161 + i * 2.100}`} />)}</g>
    <path d="M633 189L647 188V280H630z" fill="#d9d6d3" stroke="#000" strokeWidth=".900" />
    <path d="M608 192C614 205 622 206 628 194L627 250H608z" fill="#1d1d1d" />
    <path d="M611 205v40M615 207v40M619 207v40M623 204v40" stroke="#555" strokeWidth=".600" />
    <ellipse cx="618" cy="183" rx="14" ry="22" fill="#0c0c0c" />
    <ellipse cx="618" cy="185" rx="10" ry="18" fill="#959595" />
    <g stroke="#000" strokeWidth=".800">{Array.from({ length: 14 }, (_, i) => <path key={i} d={`M608 ${171 + i * 2.200}L622 ${170 + i * 2.300}`} />)}</g>
    <ellipse cx="623" cy="184" rx="4.500" ry="14" fill="#9ca0a8" />
  </g>
);

const LeftTower = () => (
  <g>
    <path d="M491 232l7-3v8l17-4 5 3-1 205-29 12z" fill="#d6d3d0" stroke="#000" />
    <path d="M493 240L514 239L519 236L498 234z" fill="#8b8987" stroke="#000" />
    <path d="M514 240L519 236L520 446L517 447z" fill="#111" stroke="#000" />
    <path d="M493 263L516 446" stroke="#000" strokeWidth=".900" />
    <path d="M441 98C442 76 454 63 468 63C480 63 490 78 490 105L495 452L471 459L450 446z" fill="#b4b1ae" stroke="#000" strokeWidth="1.600" />
    <path d="M463 107H490L495 452L468 459z" fill="#c4c3c2" />
    <path d="M463 107H490L495 452L468 459z" fill="url(#vLines)" />
    <path d="M463 107H490L495 452L468 459z" fill="url(#bands)" />
    <path d="M441 98C442 76 454 63 468 63C480 63 490 78 490 107H463C459 88 446 84 441 98z" fill="#999" />
    <path d="M441 98C442 76 454 63 468 63C480 63 490 78 490 107H463C459 88 446 84 441 98z" fill="url(#mesh)" />
    <path d="M442 100C443 80 452 68 464 65C452 76 450 88 462 107C454 84 446 88 442 100z" fill="#111" />
    <path d="M442 100L451 445M463 107L468 459M446 110L455 447M452 158L459 452M458 130L461 200" stroke="#000" strokeWidth=".800" fill="none" />
    <path d="M463 107V160L469 459" stroke="#000" strokeWidth="1.500" fill="none" />
    <g stroke="#000" strokeWidth=".800"><path d="M463 107h27M464 157h27M465 206h26M465 254h27M466 301h27M467 347h26M468 393h26M469 437h26" /></g>
    <path d="M445 100C446 84 459 84 461 100L459 140L454 157H450L446 130z" fill="#191919" />
    <ellipse cx="452" cy="98" rx="5" ry="10" fill="none" stroke="#777" />
    <path d="M449 98h6M449 101h6M449 104h6M449 107h6" stroke="#aaa" strokeWidth=".800" />
    <path d="M449 112L451 135H453L455 112L458 130L456 154M446 110L449 150" stroke="#999" strokeWidth="1" fill="none" />
    <path d="M450 136h4.500v18l-2 2-2-2z" fill="#dedbd8" stroke="#000" strokeWidth=".700" />
  </g>
);

const Scene = () => (
  <StageSvg viewBox="108 34 899 495" preserveAspectRatio="xMidYMid slice" role="img" aria-label="Perspective model view">
    <defs>
      <pattern id="vLines" width="2.700" height="9" patternUnits="userSpaceOnUse">
        <rect width="1.200" height="9" fill="#000" opacity=".75" />
      </pattern>
      <pattern id="bevelLines" width="2.200" height="40" patternUnits="userSpaceOnUse" patternTransform="rotate(-12)">
        <rect width="1.200" height="40" fill="#000" opacity=".78" />
      </pattern>
      <pattern id="mesh" width="2.400" height="2.400" patternUnits="userSpaceOnUse" patternTransform="rotate(30)">
        <path d="M0 .5h2.400M.5 0v2.400" stroke="#000" strokeWidth=".750" />
      </pattern>
      <linearGradient id="bands" gradientUnits="userSpaceOnUse" x1="0" y1="107" x2="0" y2="155" spreadMethod="repeat">
        <stop offset="0" stopColor="#fff" stopOpacity=".1" />
        <stop offset=".25" stopColor="#000" stopOpacity=".1" />
        <stop offset=".6" stopColor="#000" stopOpacity=".42" />
        <stop offset="1" stopColor="#fff" stopOpacity=".2" />
      </linearGradient>
      <linearGradient id="wheelShade" x1="0" y1="0" x2="0" y2="1">
        <stop offset="0" stopColor="#000" stopOpacity=".85" />
        <stop offset=".25" stopColor="#000" stopOpacity=".1" />
        <stop offset=".6" stopColor="#fff" stopOpacity=".2" />
        <stop offset="1" stopColor="#000" stopOpacity=".6" />
      </linearGradient>
    </defs>
    <GroundGrid />
    <SmallGear />
    <Base />
    <RightTower />
    <Wheel
      back={{ cx: 681, cy: 311, rx: 40, ry: 66 }}
      front={{ cx: 667, cy: 313, rx: 36, ry: 64 }}
      inner={{ cx: 661, cy: 314, rx: 31, ry: 53 }}
      holes={[{ cx: 671, cy: 282, rx: 7, ry: 11 }, { cx: 683, cy: 318, rx: 6, ry: 14 }, { cx: 671, cy: 352, rx: 8, ry: 10 }, { cx: 655, cy: 315, rx: 10, ry: 18 }]}
      shards={["656,258 654,270 661,270", "680,293 679,305 687,306", "668,301 665,311 674,313", "665,323 668,334 673,324", "681,335 677,347 686,352"]}
    />
    <CenterArm />
    <BigGear />
    <path d="M630 412L643 406V412L630 416z" fill="#dedbd8" />
    <path d="M578 327L585 331V427L557 411L560 400C572 388 577 360 578 327z" fill="#9a9896" stroke="#000" />
    <path d="M571 300C578 294 594 295 599 305V332L582 331C578 318 575 308 571 300z" fill="#b4b2b0" stroke="#000" />
    <g stroke="#000" strokeWidth=".800">{Array.from({ length: 12 }, (_, i) => <path key={i} d={`M${575 + i * 0.700} ${300 + i * 2.600}L599 ${300 + i * 2.600}`} />)}</g>
    <path d="M571 300C580 303 584 318 582 334C575 330 572 315 571 300z" fill="#151515" />
    <path d="M582 330L599 328V424L585 427z" fill="#d8d5d2" stroke="#000" strokeWidth="1.200" />
    <path d="M586 331L598 418M583 334L585 427" stroke="#000" strokeWidth=".900" />
    <Wheel
      back={{ cx: 536, cy: 333, rx: 40, ry: 71 }}
      front={{ cx: 522, cy: 336, rx: 35, ry: 68 }}
      inner={{ cx: 518, cy: 338, rx: 29, ry: 59 }}
      holes={[{ cx: 529, cy: 306, rx: 7, ry: 14 }, { cx: 534, cy: 348, rx: 8, ry: 14 }, { cx: 531, cy: 380, rx: 10, ry: 14 }]}
      shards={["520,325 526,345 521,362", "534,314 541,325 536,330", "537,368 541,377 534,380"]}
    />
    <LeftTower />
    <g stroke="#7e8288" strokeWidth="1" fill="none"><path d="M137 474V499M137 499L123 500M137 499L150 504" /></g>
    <g fill="#666a70" fontFamily="Inter" fontSize="10"><text x="140" y="476">z</text><text x="118" y="503">x</text><text x="152" y="503">y</text></g>
  </StageSvg>
);

/* ---------- small icons ---------- */
const Bulb = () => (
  <svg width="10" height="12" viewBox="0 0 10 12"><circle cx="5" cy="4" r="3.800" fill="#ffd94a" /><path d="M3 7h4v3l-1 1.500H4L3 10z" fill="#e6b93a" /><circle cx="4" cy="3" r="1.200" fill="#fff3b4" /></svg>
);
const OpenLock = () => (
  <svg width="12" height="12" viewBox="0 0 12 12"><path d="M6.500 6V3c0-2.500 3.500-2.500 3.500 0v2" fill="none" stroke="#c9c9c9" strokeWidth="1.300" /><path d="M1 5.500h7.500V11H1z" fill="#ffd865" /></svg>
);
const layerToolIcons: [string, React.ReactNode][] = [
  ["New layer", <g key="a"><path d="M3 4l6 7 5-2-4-5z" fill="#f0754e" /><path d="M3 6l6 7 5-2" stroke="#eee" fill="none" /><circle cx="12" cy="12" r="4" fill="#f5f5f5" /><path d="M12 9.500v5M9.500 12h5" stroke="#222" strokeWidth="1.300" /></g>],
  ["New sublayer", <g key="a"><path d="M3 3l4 4 4-2-3-2z" fill="#f0754e" /><path d="M3 5l4 4 4-2" stroke="#eee" fill="none" /><path d="M5 9v5h3" stroke="#ccc" fill="none" /><path d="M8 11l4 4 4-2-3-3z" fill="#6a8de8" /><path d="M12 6h3v4" stroke="#ddd" fill="none" /></g>],
  ["Delete layer", <path key="a" d="M4 4l10 10M14 4L4 14" stroke="#d11a1a" strokeWidth="2" />],
  ["Duplicate layer", <g key="a" fill="none" stroke="#9a9a9a"><circle cx="7" cy="8" r="4" /><circle cx="10" cy="10" r="5" /><path d="M8 10h7M8 7v4" /></g>],
  ["Move up", <path key="a" d="M3 13L9 5l6 8z" fill="#6d93f5" />],
  ["Move down", <path key="a" d="M3 6h12l-6 7z" fill="#6d93f5" />],
  ["Move to parent", <path key="a" d="M12 4v10L6 9z" fill="none" stroke="#a5a5a5" strokeWidth="1.300" />],
  ["Filter", <g key="a"><path d="M4 4h10l-4 5v6H8V9z" fill="#5d84ea" /><path d="M4 4h10l-1 1.500H5z" fill="#b4c7ff" /></g>],
  ["Columns", <g key="a" fill="#ccc">{[0, 1, 2].map((r) => [0, 1, 2].map((c) => <rect key={`${r}${c}`} x={4 + c * 3.500} y={4 + r * 3.500} width="2.800" height="2.800" />))}</g>],
  ["Menu", <path key="a" d="M4 5h10M4 9h10M4 13h10" stroke="#ddd" strokeWidth="1.500" />],
  ["Help", <g key="a"><circle cx="9" cy="9" r="6" fill="#3d6ada" stroke="#86a6f0" strokeWidth=".800" /><text x="9" y="13" textAnchor="middle" fontSize="10" fontWeight="700" fill="#fff" fontFamily="Liberation Serif">?</text></g>],
];
const layers = [
  { name: "Default", color: "#1e1e1e", current: true },
  { name: "Layer 01", color: "#e01f1f", selected: true },
  { name: "Layer 02", color: "#7a2fd0" },
  { name: "Layer 03", color: "#1010ff" },
  { name: "Layer 04", color: "#128a1a" },
  { name: "Layer 05", color: "#ffffff" },
];
const toolsets = ["Standard", "CPlanes", "Set View", "Display", "Select", "Viewport Layout", "Visibility", "Transform", "Curve Tools", "Surface Tools", "Solid Tools", "SubD Tools", "Mesh Tools", "Render Tools", "Drafting", "New in V8"];
const filters = ["Points", "Curves", "Surfaces", "PolySurfaces", "SubDs", "Meshes", "Annotations", "Lights", "Blocks", "Control Points", "Point Clouds", "Hatches", "Others", "Sub-objects", "Disable"];
const history = ["Undoing PlanarSrf", "Undoing Delete", "Undoing ExtrudeCrv", "Undoing Gumball move", "Undoing Rectangle", "Undoing Rotate3D"];

export default function App() {
  return (
    <Shell>
      <GlobalStyle />
      <TabStrip>
        {toolsets.map((t, i) => <ToolsetTab key={t} $active={i === 0}>{t}</ToolsetTab>)}
        <Spacer />
        <GearSlot aria-label="Toolbar options"><Cog /></GearSlot>
      </TabStrip>
      <ToolBar>
        <ToolBarItems>
          {topIcons.map(([name, art, fly]) => (
            <IconButton key={name} $size={22} aria-label={name}>
              <svg width="22" height="22" viewBox="0 0 22 22">{art}{fly && <Fly s={22} />}</svg>
            </IconButton>
          ))}
        </ToolBarItems>
      </ToolBar>
      <Main>
        <LeftPanel>
          <Grip><GripDot /><GripDot /><GripDot /><GripDot /></Grip>
          <CommandBox placeholder="Command" aria-label="Command" />
          <ToolGrid>
            {paletteIcons.map(([name, art, fly], i) => (
              <IconButton key={i} $size={23} aria-label={name}>
                <svg width="23" height="23" viewBox="0 0 23 23">{art}{fly && <Fly s={23} />}</svg>
              </IconButton>
            ))}
          </ToolGrid>
          <PanelTitle>Selection Filters<Cog /></PanelTitle>
          <FilterTabs>
            <FilterTab aria-label="Object snaps">
              <svg width="14" height="14" viewBox="0 0 14 14" fill="none" stroke="#aaa"><circle cx="7" cy="7" r="5.500" /><path d="M8 7h5" stroke="#ddd" /><rect x="5" y="5.500" width="3" height="3" stroke="#ddd" /></svg>
            </FilterTab>
            <FilterTab $active aria-label="Selection filters">
              <svg width="14" height="14" viewBox="0 0 14 14"><path d="M3 3h8L8 7v5l-2-1V7z" fill="#9d9d9d" /><path d="M11 1h2v2h-2zM1 11h2v2H1z" fill="#ccc" /></svg>
            </FilterTab>
          </FilterTabs>
          <MoreButton aria-label="More">»</MoreButton>
          <FilterList>
            {filters.map((f, i) => (
              <FilterRow key={f}><Check type="checkbox" defaultChecked={i < 13} />{f}</FilterRow>
            ))}
          </FilterList>
        </LeftPanel>
        <ViewColumn>
          <Stage>
            <Scene />
            <StageLabel>
              <StageButton>Perspective</StageButton>
              <StageButton $narrow aria-label="Viewport menu">
                <svg width="7" height="4" viewBox="0 0 7 4"><path d="M0 0h7L3.500 4z" fill="#fff" /></svg>
              </StageButton>
            </StageLabel>
          </Stage>
          <ViewTabs>
            <LayoutButton aria-label="Four viewports">
              <svg width="14" height="12" viewBox="0 0 14 12" fill="none" stroke="#8c8c8c"><path d="M1.500 1.500h11v9h-11zM6.500 1.500v9M1.500 5.500h11" /></svg>
            </LayoutButton>
            <LayoutButton aria-label="Single viewport">
              <svg width="14" height="12" viewBox="0 0 14 12"><path d="M.5.5h12v11H.5z" fill="none" stroke="#3f6fc4" /></svg>
            </LayoutButton>
            {["Perspective", "Top", "Front", "Right", "Layouts..."].map((t, i) => <ViewTab key={t} $active={i === 0}>{t}</ViewTab>)}
          </ViewTabs>
        </ViewColumn>
        <RightPanel>
          <LayersTitle>Layers<Cog /></LayersTitle>
          <LayersBody>
            <LayerTools>
              {layerToolIcons.map(([name, art]) => (
                <IconButton key={name} $size={18} aria-label={name}><svg width="18" height="18" viewBox="0 0 18 18">{art}</svg></IconButton>
              ))}
            </LayerTools>
            <SearchBox>
              <svg width="12" height="12" viewBox="0 0 12 12" fill="none" stroke="#ddd" strokeWidth="1.300"><circle cx="5" cy="5" r="4" /><path d="M8 8l3.500 3.500" /></svg>
              <input placeholder="Search" aria-label="Search layers" />
            </SearchBox>
            <TableWrap>
              <LayerTable>
                <colgroup><col /><col width="16" /><col width="16" /><col width="16" /><col width="3" /></colgroup>
                <thead><tr><th>Layer</th>{[0, 1, 2, 3].map((i) => <th key={i}><ColMark /></th>)}</tr></thead>
                <tbody>
                  <GapRow />
                  {layers.map((l) => (
                    <LayerRow key={l.name} $selected={l.selected} $strong={l.current}>
                      <td>{l.name}</td>
                      <td>{l.current && <svg width="14" height="11" viewBox="0 0 14 11"><path d="M1 6l1.500-1.500L5 7l6.500-6L13 2 5 10z" fill="none" stroke="#ddd" /></svg>}</td>
                      <td>{!l.current && <Bulb />}</td>
                      <td>{!l.current && <OpenLock />}</td>
                      <td><Swatch $color={l.color} /></td>
                    </LayerRow>
                  ))}
                </tbody>
              </LayerTable>
            </TableWrap>
          </LayersBody>
          <SideTabs>
            <SideTab aria-label="Materials"><svg width="14" height="14" viewBox="0 0 14 14"><ColorWheel cx={7} cy={7} r={4} w={2} /></svg></SideTab>
            <SideTab $active aria-label="Layers"><svg width="13" height="13" viewBox="0 0 22 22"><Layers /></svg></SideTab>
            <SideTab aria-label="Display"><svg width="12" height="12" viewBox="0 0 12 12"><path d="M1 2h10v7H1z" fill="#c5c5c5" /><path d="M4 10h4v1H4z" fill="#999" /></svg></SideTab>
            <SideTab aria-label="Help"><svg width="12" height="12" viewBox="0 0 12 12"><path d="M.5 1h11v10H.5z" fill="#dfe6fa" /><circle cx="6" cy="6.500" r="4" fill="#3763cf" /><text x="6" y="9.500" textAnchor="middle" fontSize="8" fontWeight="700" fill="#fff">?</text></svg></SideTab>
          </SideTabs>
        </RightPanel>
      </Main>
      <History>
        <HistoryLabel>Command...</HistoryLabel>
        <HistoryList>{history.map((h) => <li key={h}>{h}</li>)}</HistoryList>
      </History>
      <StatusBar>
        <StatusSlot $w={17} aria-label="Left sidebar"><svg width="11" height="11" viewBox="0 0 11 11"><path d="M1 1h9v9H1z" fill="none" stroke="#d5d5d5" strokeWidth="1.500" /><path d="M2 2h3v7H2z" fill="#d5d5d5" /></svg></StatusSlot>
        <StatusSlot $w={27} aria-label="List"><svg width="12" height="11" viewBox="0 0 12 11" stroke="#aaa"><path d="M0 1.500h2M4 1.500h8M0 5.500h2M4 5.500h8M0 9.500h2M4 9.500h8" /></svg></StatusSlot>
        <StatusSlot $w={55}>CPlane</StatusSlot>
        <StatusSlot $w={59}>x -96.216</StatusSlot>
        <StatusSlot $w={73}>y -26.054</StatusSlot>
        <StatusSlot $w={53}>z 0</StatusSlot>
        <StatusSlot $w={67}>Millimeters</StatusSlot>
        <StatusSlot $w={91}><MaterialSwatch />Default</StatusSlot>
        <Toggle $w={55}>Grid Snap</Toggle>
        <Toggle $w={38}>Ortho</Toggle>
        <Toggle $w={41}>Planar</Toggle>
        <Toggle $w={41} $on>Osnap</Toggle>
        <Toggle $w={65} $on>SmartTrack</Toggle>
        <Toggle $w={91} $on>Gumball (CPlane)</Toggle>
        <StatusSlot $w={125}><svg width="18" height="11" viewBox="0 0 18 11"><path d="M7 5V3c0-2 4-2 4 0v2" fill="none" stroke="#aaa" strokeWidth="1.200" /><path d="M6 5h6v5H6z" fill="#ddd" /></svg>Auto CPlane (Object)</StatusSlot>
        <Toggle $w={79}>Record History</Toggle>
        <Toggle $w={36} $on>Filter</Toggle>
        <StatusSlot $w={112} $lead={8}>Minutes from last save: :</StatusSlot>
        <Spacer />
        <StatusSlot $w={17} aria-label="Right sidebar"><svg width="10" height="11" viewBox="0 0 10 11"><path d="M1.500 1h6v9h-6z" fill="none" stroke="#ccc" strokeWidth="2" /></svg></StatusSlot>
      </StatusBar>
    </Shell>
  );
}
